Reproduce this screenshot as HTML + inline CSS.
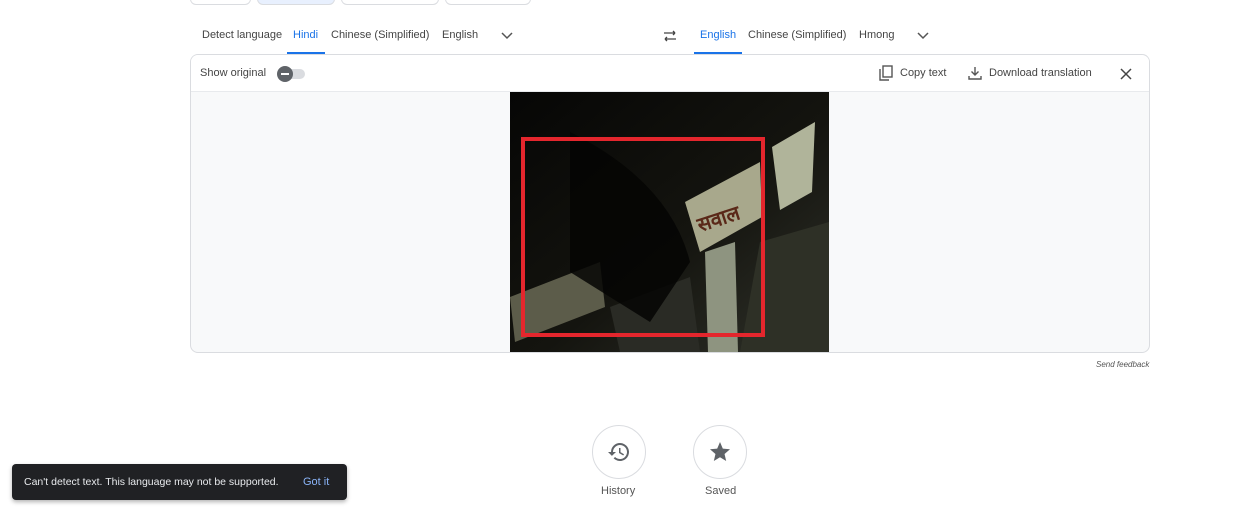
<!DOCTYPE html>
<html><head><meta charset="utf-8"><style>
*{margin:0;padding:0;box-sizing:border-box}
body{width:1247px;height:511px;background:#fff;font-family:"Liberation Sans",sans-serif;position:relative;overflow:hidden;color:#3c4043}
.a{position:absolute}
.tb{position:absolute;top:-10px;height:15px;border:1px solid #dadce0;border-radius:6px}
.tab{position:absolute;top:29px;font-size:11px;color:#444}
.sel{color:#1a73e8}
.ul{position:absolute;top:52px;height:2px;background:#1a73e8}
</style></head><body>
<div class="tb" style="left:190px;width:61px"></div>
<div class="tb" style="left:257px;width:78px;background:#e8f0fe"></div>
<div class="tb" style="left:341px;width:98px"></div>
<div class="tb" style="left:445px;width:86px"></div>

<div class="tab" style="left:202px">Detect language</div>
<div class="tab sel" style="left:293px">Hindi</div>
<div class="ul" style="left:287px;width:38px"></div>
<div class="tab" style="left:331px">Chinese (Simplified)</div>
<div class="tab" style="left:442px">English</div>
<svg class="a" style="left:500px;top:30px" width="14" height="12"><path d="M2 3l5 5 5-5" fill="none" stroke="#555" stroke-width="1.5"/></svg>
<svg class="a" style="left:661px;top:28px" width="18" height="16"><path d="M4 11h11M4 11l2-2M4 11l2 2M14 5H3M14 5l-2-2M14 5l-2 2" fill="none" stroke="#444" stroke-width="1.3"/></svg>
<div class="tab sel" style="left:700px">English</div>
<div class="ul" style="left:694px;width:48px"></div>
<div class="tab" style="left:748px">Chinese (Simplified)</div>
<div class="tab" style="left:859px">Hmong</div>
<svg class="a" style="left:916px;top:30px" width="14" height="12"><path d="M2 3l5 5 5-5" fill="none" stroke="#555" stroke-width="1.5"/></svg>

<div class="a" style="left:190px;top:54px;width:960px;height:299px;border:1px solid #dadce0;border-radius:8px;background:#f8f9fa;overflow:hidden">
 <div class="a" style="left:0;top:0;width:958px;height:37px;background:#fff;border-bottom:1px solid #e8eaed"></div>
 <div class="a" style="left:9px;top:12px;font-size:11px;color:#444">Show original</div>
 <div class="a" style="left:88px;top:14px;width:26px;height:10px;border-radius:5px;background:#dadce0"></div>
 <div class="a" style="left:86px;top:11px;width:16px;height:16px;border-radius:8px;background:#5f6368"></div>
 <div class="a" style="left:90px;top:18px;width:8px;height:2px;background:#fff"></div>
 <svg class="a" style="left:688px;top:10px" width="14" height="16"><rect x="4" y="1" width="9" height="11" fill="none" stroke="#555" stroke-width="1.4"/><path d="M1 4v11h9" fill="none" stroke="#555" stroke-width="1.4"/></svg>
 <div class="a" style="left:709px;top:12px;font-size:11px;color:#444">Copy text</div>
 <svg class="a" style="left:777px;top:11px" width="14" height="14"><path d="M7 1v8M3.5 5.5L7 9l3.5-3.5M1 10v3h12v-3" fill="none" stroke="#555" stroke-width="1.4"/></svg>
 <div class="a" style="left:798px;top:12px;font-size:11px;color:#444">Download translation</div>
 <svg class="a" style="left:928px;top:12px" width="14" height="14"><path d="M2 2l10 10M12 2L2 12" stroke="#444" stroke-width="1.5"/></svg>
</div>

<svg class="a" style="left:510px;top:92px" width="319" height="260">
 <defs><linearGradient id="g" x1="0" y1="0" x2="1" y2="1"><stop offset="0" stop-color="#060605"/><stop offset="0.55" stop-color="#14140f"/><stop offset="1" stop-color="#30322a"/></linearGradient></defs>
 <rect width="319" height="260" fill="url(#g)"/>
 <polygon points="250,150 319,130 319,260 230,260" fill="#2e3026"/>
 <polygon points="175,110 250,70 252,125 190,160" fill="#a8a88c"/>
 <polygon points="262,55 305,30 302,100 270,118" fill="#b0b49a"/>
 <polygon points="195,160 225,150 228,260 198,260" fill="#8e9480"/>
 <polygon points="0,205 90,170 95,215 5,250" fill="#5c5c4a"/>
 <polygon points="100,215 180,185 190,260 110,260" fill="#2a2b25"/>
 <text x="190" y="140" font-size="20" fill="#5a2818" font-weight="bold" transform="rotate(-18 190 140)">सवाल</text>
 <path d="M60 40 Q160 90 180 170 L140 230 L60 180Z" fill="#050504" opacity="0.85"/>
 <rect x="13" y="47" width="240" height="196" fill="none" stroke="#e4262d" stroke-width="4"/>
</svg>

<div class="a" style="left:1096px;top:360px;font-size:8px;font-style:italic;color:#555">Send feedback</div>

<div class="a" style="left:592px;top:425px;width:54px;height:54px;border:1px solid #dadce0;border-radius:50%"></div>
<svg class="a" style="left:607px;top:440px" width="24" height="24" viewBox="0 0 24 24"><path d="M13 3a9 9 0 0 0-9 9H1l3.9 3.9L9 12H6a7 7 0 1 1 2.05 4.95l-1.42 1.42A9 9 0 1 0 13 3zm-1 5v5l4.25 2.52.77-1.28-3.52-2.09V8z" fill="#5f6368"/></svg>
<div class="a" style="left:601px;top:485px;font-size:11px;color:#555">History</div>
<div class="a" style="left:693px;top:425px;width:54px;height:54px;border:1px solid #dadce0;border-radius:50%"></div>
<svg class="a" style="left:708px;top:440px" width="24" height="24" viewBox="0 0 24 24"><path d="M12 17.27L18.18 21l-1.64-7.03L22 9.24l-7.19-.61L12 2 9.19 8.63 2 9.24l5.46 4.73L5.82 21z" fill="#5f6368"/></svg>
<div class="a" style="left:705px;top:485px;font-size:11px;color:#555">Saved</div>

<div class="a" style="left:12px;top:464px;width:335px;height:36px;background:#202124;border-radius:4px;box-shadow:0 2px 4px rgba(0,0,0,.3)"></div>
<div class="a" style="left:24px;top:476px;font-size:10.5px;color:#e8eaed">Can't detect text. This language may not be supported.</div>
<div class="a" style="left:303px;top:476px;font-size:11px;color:#8ab4f8">Got it</div>
</body></html>
